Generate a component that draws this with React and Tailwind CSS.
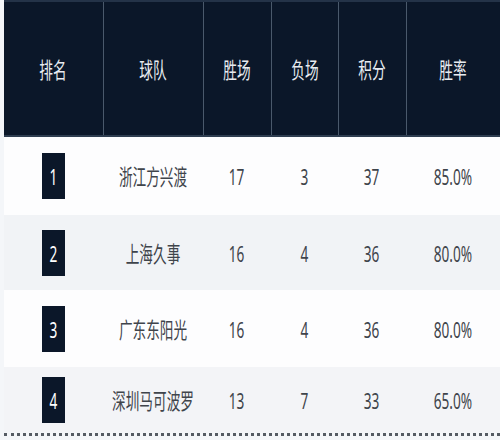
import React from "react";

const cols = ["排名", "球队", "胜场", "负场", "积分", "胜率"];

const rows = [
  { rank: 1, team: "浙江方兴渡", win: 17, lose: 3, pts: 37, rate: "85.0%", h: "h-[78px]", bg: "bg-[#fdfdfe]" },
  { rank: 2, team: "上海久事", win: 16, lose: 4, pts: 36, rate: "80.0%", h: "h-[75px]", bg: "bg-[#f1f3f6]" },
  { rank: 3, team: "广东东阳光", win: 16, lose: 4, pts: 36, rate: "80.0%", h: "h-[77px]", bg: "bg-[#fdfdfe]" },
  { rank: 4, team: "深圳马可波罗", win: 13, lose: 7, pts: 33, rate: "65.0%", h: "h-[65px]", bg: "bg-[#f3f4f7]" },
];

const grid = "grid grid-cols-[99px_100px_68px_67px_68px_1fr]";

const Txt = ({ children, className = "" }) => (
  <span className={`inline-block scale-x-[0.62] whitespace-nowrap text-[22px] leading-none ${className}`}>{children}</span>
);

export default function App() {
  return (
    <div
      className="w-[500px] h-[440px] bg-[#f4f6f9] pl-1 overflow-hidden"
      style={{ fontFamily: '"Noto Sans", "Noto Sans CJK SC", sans-serif' }}
    >
      {/* header */}
      <div className={`${grid} h-[137px] bg-[#0b1729] border-t-2 border-[#243348] border-b-2 border-b-[#2e3d50]`}>
        {cols.map((c, i) => (
          <div
            key={c}
            className={`flex items-center justify-center ${i > 0 ? "border-l border-[#4a596b]" : ""}`}
          >
            <Txt className="text-[#e8ecf1]">{c}</Txt>
          </div>
        ))}
      </div>

      {rows.map((r) => (
        <div key={r.rank} className={`${grid} ${r.h} ${r.bg} text-[#3f444b]`}>
          <div className="flex items-center justify-center">
            <div className="w-[23px] h-[46px] bg-[#0b1729] flex items-center justify-center">
              <Txt className="text-white">{r.rank}</Txt>
            </div>
          </div>
          <div className="flex items-center justify-center"><Txt>{r.team}</Txt></div>
          <div className="flex items-center justify-center"><Txt>{r.win}</Txt></div>
          <div className="flex items-center justify-center"><Txt>{r.lose}</Txt></div>
          <div className="flex items-center justify-center"><Txt>{r.pts}</Txt></div>
          <div className="flex items-center justify-center"><Txt>{r.rate}</Txt></div>
        </div>
      ))}

      <div className="h-px" />
      <div className="border-t-[3px] border-dotted border-[#555b63]" />
    </div>
  );
}
